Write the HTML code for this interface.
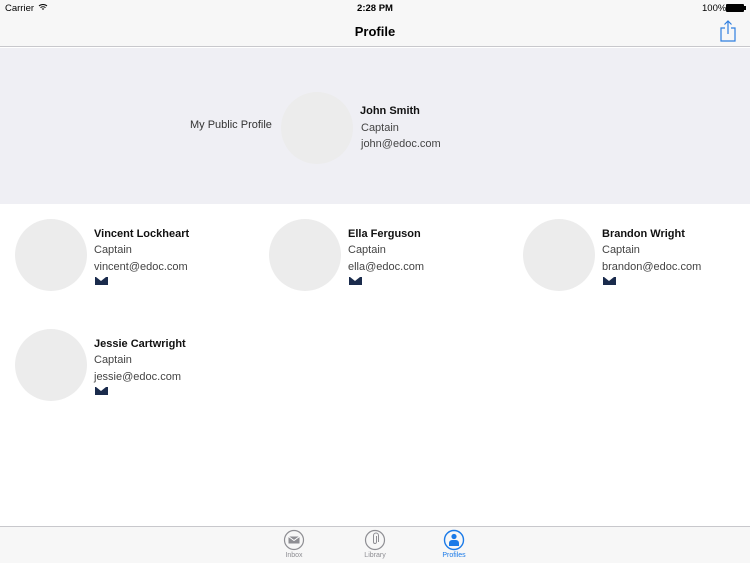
<!DOCTYPE html>
<html><head><style>
*{margin:0;padding:0;box-sizing:border-box}
body{width:750px;height:563px;position:relative;overflow:hidden;background:#fff;font-family:"Liberation Sans",sans-serif;color:#222}
.abs{position:absolute}
.circ{position:absolute;width:72px;height:72px;border-radius:50%;background:#ececec}
.nm{position:absolute;font-weight:bold;font-size:11px;color:#111;white-space:nowrap}
.t{position:absolute;font-size:11px;color:#444;white-space:nowrap}
.env{position:absolute;width:13px;height:8px;background:#1a2b4c}
.env:after{content:"";position:absolute;left:1px;top:0;width:0;height:0;border-left:5.5px solid transparent;border-right:5.5px solid transparent;border-top:4px solid #fff}
</style></head><body>
<div class="abs" style="left:0;top:0;width:750px;height:47px;background:#f7f7f7;border-bottom:1px solid #c8c8cc"></div>
<div class="abs" style="left:5px;top:3px;font-size:9.5px;color:#000">Carrier</div>
<svg class="abs" style="left:38px;top:3px" width="10" height="8" viewBox="0 0 10 8"><path d="M1 3a6 6 0 0 1 8 0M2.5 4.6a4 4 0 0 1 5 0M4 6.2a2 2 0 0 1 2 0" stroke="#000" fill="none" stroke-width="1"/></svg>
<div class="abs" style="left:0;width:750px;top:3px;text-align:center;font-size:9.5px;color:#000;font-weight:bold">2:28 PM</div>
<div class="abs" style="left:702px;top:3px;font-size:9.5px;color:#000">100%</div>
<div class="abs" style="left:726px;top:4px;width:18px;height:8px;background:#000;border-radius:1px"></div>
<div class="abs" style="left:744px;top:6px;width:2px;height:4px;background:#000"></div>
<div class="abs" style="left:0;width:750px;top:24px;text-align:center;font-size:13px;font-weight:bold;color:#000">Profile</div>
<svg class="abs" style="left:719px;top:20px" width="18" height="22" viewBox="0 0 18 22" fill="none" stroke="#2f7fe0" stroke-width="1.2"><path d="M6 8H2v13h14V8h-4M9 1v13M5.5 4.5L9 1l3.5 3.5"/></svg>
<div class="abs" style="left:0;top:48px;width:750px;height:156px;background:#efeff4"></div>
<div class="t" style="left:190px;top:119px;color:#333">My Public Profile</div>
<div class="circ" style="left:281px;top:92px"></div>
<div class="nm" style="left:360px;top:105px">John Smith</div>
<div class="t" style="left:361px;top:122px">Captain</div>
<div class="t" style="left:361px;top:138px">john@edoc.com</div>

<div class="circ" style="left:15px;top:219px"></div>
<div class="nm" style="left:94px;top:228px">Vincent Lockheart</div>
<div class="t" style="left:94px;top:244px">Captain</div>
<div class="t" style="left:94px;top:261px">vincent@edoc.com</div>
<div class="env" style="left:95px;top:277px"></div>

<div class="circ" style="left:269px;top:219px"></div>
<div class="nm" style="left:348px;top:228px">Ella Ferguson</div>
<div class="t" style="left:348px;top:244px">Captain</div>
<div class="t" style="left:348px;top:261px">ella@edoc.com</div>
<div class="env" style="left:349px;top:277px"></div>

<div class="circ" style="left:523px;top:219px"></div>
<div class="nm" style="left:602px;top:228px">Brandon Wright</div>
<div class="t" style="left:602px;top:244px">Captain</div>
<div class="t" style="left:602px;top:261px">brandon@edoc.com</div>
<div class="env" style="left:603px;top:277px"></div>

<div class="circ" style="left:15px;top:329px"></div>
<div class="nm" style="left:94px;top:338px">Jessie Cartwright</div>
<div class="t" style="left:94px;top:354px">Captain</div>
<div class="t" style="left:94px;top:371px">jessie@edoc.com</div>
<div class="env" style="left:95px;top:387px"></div>

<div class="abs" style="left:0;top:526px;width:750px;height:37px;background:#f7f7f7;border-top:1px solid #c8c8cc"></div>
<svg class="abs" style="left:283px;top:529px" width="22" height="22" viewBox="0 0 22 22"><circle cx="11" cy="11" r="9.5" fill="none" stroke="#8e8e93" stroke-width="1.2"/><rect x="5.5" y="7.5" width="11" height="7" fill="#8e8e93"/><path d="M5.5 7.5L11 11.5L16.5 7.5" stroke="#fff" fill="none" stroke-width="1"/></svg>
<div class="abs" style="left:274px;top:552px;width:40px;text-align:center;font-size:7px;color:#8e8e93">Inbox</div>
<svg class="abs" style="left:364px;top:529px" width="22" height="22" viewBox="0 0 22 22"><circle cx="11" cy="11" r="9.5" fill="none" stroke="#8e8e93" stroke-width="1.2"/><path d="M12.5 7v6a1.5 1.5 0 0 1-3 0V6.5a2.5 2.5 0 0 1 5 0V13" fill="none" stroke="#8e8e93" stroke-width="1"/></svg>
<div class="abs" style="left:355px;top:552px;width:40px;text-align:center;font-size:7px;color:#8e8e93">Library</div>
<svg class="abs" style="left:443px;top:529px" width="22" height="22" viewBox="0 0 22 22"><circle cx="11" cy="11" r="9.5" fill="none" stroke="#1a7ae8" stroke-width="1.4"/><circle cx="11" cy="7.5" r="2.6" fill="#1a7ae8"/><path d="M6 17v-3a3 3 0 0 1 3-3h4a3 3 0 0 1 3 3v3z" fill="#1a7ae8"/></svg>
<div class="abs" style="left:434px;top:552px;width:40px;text-align:center;font-size:7px;color:#1a7ae8">Profiles</div>
</body></html>
